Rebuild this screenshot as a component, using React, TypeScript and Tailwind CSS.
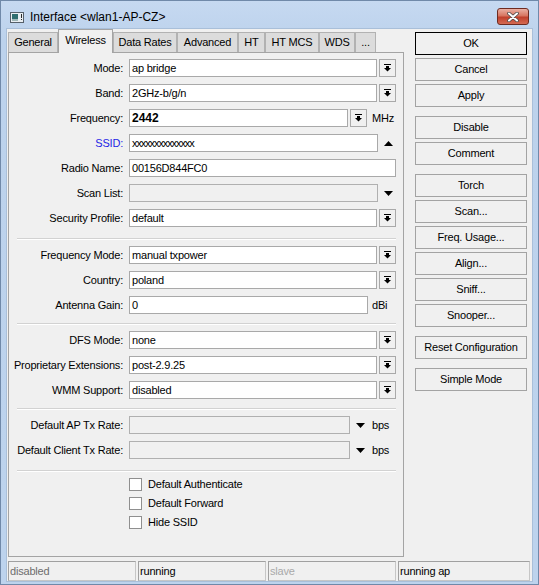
import React from "react";

// Small "drop-down" glyph: a bar over a stubby down arrow
function DropIcon() {
  return (
    <svg width="7" height="8" viewBox="0 0 7 8" className="block">
      <rect x="0" y="0" width="7" height="1" fill="#000" />
      <rect x="2" y="2" width="3" height="2" fill="#000" />
      <polygon points="0,4 7,4 3.5,7.5" fill="#000" />
    </svg>
  );
}

function DropButton() {
  return (
    <div className="ml-[2px] w-[17px] h-[18px] shrink-0 border border-[#a9a9a9] bg-[#f0f0f0] flex items-center justify-center">
      <DropIcon />
    </div>
  );
}

function TriUp() {
  return (
    <div className="w-[20px] h-[18px] flex items-center justify-center">
      <svg width="9" height="5" viewBox="0 0 9 5" className="block">
        <polygon points="0,5 9,5 4.5,0" fill="#000" />
      </svg>
    </div>
  );
}

function TriDown() {
  return (
    <div className="w-[20px] h-[18px] flex items-center justify-center">
      <svg width="9" height="5" viewBox="0 0 9 5" className="block">
        <polygon points="0,0 9,0 4.5,5" fill="#000" />
      </svg>
    </div>
  );
}

function Row({
  label,
  blue,
  children,
}: {
  label: string;
  blue?: boolean;
  children: React.ReactNode;
}) {
  return (
    <div className="flex items-center h-[18px]">
      <div className={blue ? "w-[114px] text-right text-[#1f1fe6]" : "w-[114px] text-right"}>{label}</div>
      <div className="ml-[6px] flex items-center h-[18px]">{children}</div>
    </div>
  );
}

function Sep({ top }: { top: string }) {
  return (
    <div className={`${top} ml-[8px] w-[379px] h-[2px] border-t border-t-[#d2d2d2] border-b border-b-white`} />
  );
}

function Check({ label }: { label: string }) {
  return (
    <div className="flex items-center h-[13px]">
      <span className="w-[13px] h-[13px] border border-[#8f8f8f] bg-white" />
      <span className="ml-[6px]">{label}</span>
    </div>
  );
}

function Btn({ label, top, def }: { label: string; top?: string; def?: boolean }) {
  return (
    <div
      className={`${top ?? ""} h-[23px] w-full flex items-center justify-center bg-[#f0f0f0] border ${
        def ? "border-black" : "border-[#a3a3a3]"
      }`}
    >
      {label}
    </div>
  );
}

const tabs: { label: string; w: string; active?: boolean }[] = [
  { label: "General", w: "w-[50px]" },
  { label: "Wireless", w: "w-[55px]", active: true },
  { label: "Data Rates", w: "w-[64px]" },
  { label: "Advanced", w: "w-[61px]" },
  { label: "HT", w: "w-[27px]" },
  { label: "HT MCS", w: "w-[54px]" },
  { label: "WDS", w: "w-[36px]" },
  { label: "...", w: "w-[21px]" },
];

export default function App() {
  return (
    <div className="w-[539px] h-[585px] flex flex-col bg-[linear-gradient(to_bottom,#c6d9f1,#bcd2ec_40px,#bdd3ed)] shadow-[inset_0_0_0_1px_#7089a9] font-['Liberation_Sans',Arial,sans-serif] text-[11px] tracking-[-0.2px] text-black">
      {/* title bar */}
      <div className="h-[29px] flex items-center pt-[5px] shrink-0">
        <svg width="14" height="11" viewBox="0 0 14 11" className="ml-[10px] block">
          <rect x="0.5" y="0.5" width="13" height="10" fill="#e9eef2" stroke="#56606a" />
          <rect x="2" y="2" width="6" height="7" fill="#2f6e70" />
          <rect x="2" y="7" width="6" height="2" fill="#9fb7b8" />
          <rect x="11" y="2" width="1" height="4" fill="#2a2a2a" />
          <rect x="11" y="7" width="1" height="1" fill="#2a2a2a" />
        </svg>
        <div className="ml-[6px] text-[12px] tracking-normal">Interface &lt;wlan1-AP-CZ&gt;</div>
        <div className="ml-auto mr-[10px] self-start mt-[3px] w-[32px] h-[17px] rounded-[3px] border border-[#6e2b20] bg-[linear-gradient(to_bottom,#eab0a3,#d77560_45%,#c0402c_55%,#d46a52)] flex items-center justify-center">
          <svg width="12" height="10" viewBox="0 0 12 10" className="block">
            <path d="M2 1.5 L10 8.5 M10 1.5 L2 8.5" stroke="#4a4a4a" strokeWidth="3.6" strokeLinecap="round" />
            <path d="M2 1.5 L10 8.5 M10 1.5 L2 8.5" stroke="#ffffff" strokeWidth="2" strokeLinecap="round" />
          </svg>
        </div>
      </div>

      {/* client area */}
      <div className="mx-[7px] mb-[4px] flex-1 min-h-0 bg-[#f0f0f0] flex flex-col shadow-[0_0_0_1px_#a9bfd9]">
        <div className="flex flex-1 min-h-0">
          {/* tab control */}
          <div className="ml-[1px] w-[396px] flex flex-col">
            <div className="relative z-10 h-[23px] flex items-end shrink-0">
              {tabs.map((t) =>
                t.active ? (
                  <div
                    key={t.label}
                    className={`${t.w} h-[24px] -mb-px pb-[3px] flex items-center justify-center bg-[#f0f0f0] border border-b-0 border-[#a4a4a4]`}
                  >
                    {t.label}
                  </div>
                ) : (
                  <div
                    key={t.label}
                    className={`${t.w} h-[20px] flex items-center justify-center bg-[#dcdcdc] border border-b-0 border-[#b2b2b2]`}
                  >
                    {t.label}
                  </div>
                )
              )}
            </div>

            <div className="flex-1 border border-[#a4a4a4] bg-[#f0f0f0] flex flex-col pt-[6px]">
              <div className="flex flex-col gap-[7px]">
                <Row label="Mode:">
                  <div className="w-[248px] h-[18px] border border-[#a9a9a9] bg-white pl-[2px] flex items-center">ap bridge</div>
                  <DropButton />
                </Row>
                <Row label="Band:">
                  <div className="w-[248px] h-[18px] border border-[#a9a9a9] bg-white pl-[2px] flex items-center">2GHz-b/g/n</div>
                  <DropButton />
                </Row>
                <Row label="Frequency:">
                  <div className="w-[219px] h-[18px] border border-[#a9a9a9] bg-white pl-[2px] flex items-center text-[12px] font-bold tracking-normal">2442</div>
                  <DropButton />
                  <span className="ml-[5px]">MHz</span>
                </Row>
                <Row label="SSID:" blue>
                  <div className="w-[249px] h-[18px] border border-[#a9a9a9] bg-white pl-[2px] flex items-center tracking-[-1.1px]">xxxxxxxxxxxxxx</div>
                  <TriUp />
                </Row>
                <Row label="Radio Name:">
                  <div className="w-[267px] h-[18px] border border-[#a9a9a9] bg-white pl-[2px] flex items-center">00156D844FC0</div>
                </Row>
                <Row label="Scan List:">
                  <div className="w-[249px] h-[18px] border border-[#b0b0b0] bg-[#f0f0f0]" />
                  <TriDown />
                </Row>
                <Row label="Security Profile:">
                  <div className="w-[248px] h-[18px] border border-[#a9a9a9] bg-white pl-[2px] flex items-center">default</div>
                  <DropButton />
                </Row>
              </div>

              <Sep top="mt-[11px]" />

              <div className="mt-[6px] flex flex-col gap-[7px]">
                <Row label="Frequency Mode:">
                  <div className="w-[248px] h-[18px] border border-[#a9a9a9] bg-white pl-[2px] flex items-center">manual txpower</div>
                  <DropButton />
                </Row>
                <Row label="Country:">
                  <div className="w-[248px] h-[18px] border border-[#a9a9a9] bg-white pl-[2px] flex items-center">poland</div>
                  <DropButton />
                </Row>
                <Row label="Antenna Gain:">
                  <div className="w-[239px] h-[18px] border border-[#a9a9a9] bg-white pl-[2px] flex items-center">0</div>
                  <span className="ml-[4px]">dBi</span>
                </Row>
              </div>

              <Sep top="mt-[9px]" />

              <div className="mt-[6px] flex flex-col gap-[7px]">
                <Row label="DFS Mode:">
                  <div className="w-[248px] h-[18px] border border-[#a9a9a9] bg-white pl-[2px] flex items-center">none</div>
                  <DropButton />
                </Row>
                <Row label="Proprietary Extensions:">
                  <div className="w-[248px] h-[18px] border border-[#a9a9a9] bg-white pl-[2px] flex items-center">post-2.9.25</div>
                  <DropButton />
                </Row>
                <Row label="WMM Support:">
                  <div className="w-[248px] h-[18px] border border-[#a9a9a9] bg-white pl-[2px] flex items-center">disabled</div>
                  <DropButton />
                </Row>
              </div>

              <Sep top="mt-[9px]" />

              <div className="mt-[6px] flex flex-col gap-[7px]">
                <Row label="Default AP Tx Rate:">
                  <div className="w-[221px] h-[18px] border border-[#b0b0b0] bg-[#f0f0f0]" />
                  <TriDown />
                  <span className="ml-[2px]">bps</span>
                </Row>
                <Row label="Default Client Tx Rate:">
                  <div className="w-[221px] h-[18px] border border-[#b0b0b0] bg-[#f0f0f0]" />
                  <TriDown />
                  <span className="ml-[2px]">bps</span>
                </Row>
              </div>

              <Sep top="mt-[11px]" />

              <div className="mt-[6px] ml-[120px] flex flex-col gap-[6px]">
                <Check label="Default Authenticate" />
                <Check label="Default Forward" />
                <Check label="Hide SSID" />
              </div>
            </div>
          </div>

          {/* command buttons */}
          <div className="ml-[11px] w-[112px] pt-[3px] flex flex-col">
            <Btn label="OK" def />
            <Btn label="Cancel" top="mt-[3px]" />
            <Btn label="Apply" top="mt-[3px]" />
            <Btn label="Disable" top="mt-[9px]" />
            <Btn label="Comment" top="mt-[3px]" />
            <Btn label="Torch" top="mt-[9px]" />
            <Btn label="Scan..." top="mt-[3px]" />
            <Btn label="Freq. Usage..." top="mt-[3px]" />
            <Btn label="Align..." top="mt-[3px]" />
            <Btn label="Sniff..." top="mt-[3px]" />
            <Btn label="Snooper..." top="mt-[3px]" />
            <Btn label="Reset Configuration" top="mt-[9px]" />
            <Btn label="Simple Mode" top="mt-[9px]" />
          </div>
        </div>

        {/* status bar */}
        <div className="mt-[4px] h-[20px] shrink-0 flex gap-[2px] pl-[1px] pr-[2px]">
          <div className="w-[128px] border border-[#c6c6c6] border-t-[#a0a0a0] border-l-[#a0a0a0] pl-[1px] flex items-center text-[#6d6d6d]">disabled</div>
          <div className="w-[128px] border border-[#c6c6c6] border-t-[#a0a0a0] border-l-[#a0a0a0] pl-[1px] flex items-center">running</div>
          <div className="w-[128px] border border-[#c6c6c6] border-t-[#a0a0a0] border-l-[#a0a0a0] pl-[1px] flex items-center text-[#a9a9a9]">slave</div>
          <div className="flex-1 border border-[#c6c6c6] border-t-[#a0a0a0] border-l-[#a0a0a0] pl-[1px] flex items-center">running ap</div>
        </div>
      </div>
    </div>
  );
}
